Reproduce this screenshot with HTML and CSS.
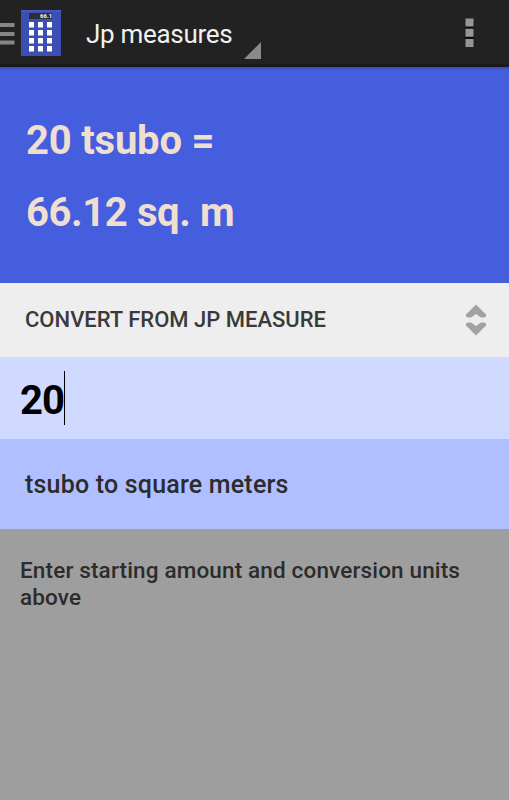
FILE: index.html
```
<!DOCTYPE html>
<html lang="en">
<head>
  <meta charset="UTF-8">
  <title>Jp measures</title>
  <meta name="viewport" content="width=device-width, initial-scale=1.0">
  <link rel="stylesheet" href="styles.css">
</head>
<body>

  <header class="action-bar">
    <svg class="drawer" width="15" height="24" viewBox="0 0 15 24">
      <path d="M0 1h14.5v4H0zM0 10h14.5v4H0zM0 18.5h14.5v4H0z" fill="#858687"/>
    </svg>
    <svg class="app-icon" width="40" height="46" viewBox="0 0 40 46">
      <rect width="40" height="46" fill="#3d4fb4"/>
      <rect width="40" height="1.5" fill="#4a5ac0"/>
      <rect x="8" y="3" width="23" height="6" fill="#2c2e38"/>
      <text class="app-icon-text" x="19" y="8">66.1</text>
      <g fill="#fff">
        <path d="M8 12h5v5.5H8zM17 12h5v5.5h-5zM26 12h5v5.5h-5z"/>
        <path d="M8 20h5v5.5H8zM17 20h5v5.5h-5zM26 20h5v5.5h-5z"/>
        <path d="M8 28h5v5.5H8zM17 28h5v5.5h-5zM26 28h5v5.5h-5z"/>
        <path d="M8 36h5v5.5H8zM17 36h5v5.5h-5zM26 36h5v5.5h-5z"/>
      </g>
    </svg>
    <h1 class="title">Jp measures</h1>
    <svg class="corner" width="17" height="17" viewBox="0 0 17 17">
      <path d="M17 0v17H0z" fill="#8a8a8a"/>
    </svg>
    <svg class="overflow" width="9" height="30" viewBox="0 0 9 30">
      <path d="M0 7h9v4H0zM0 17h9v4H0z" fill="#0c0c0c"/>
      <path d="M.5 .5h8v8h-8zM.5 10.7h8v8h-8zM.5 20.9h8v8h-8z" fill="#969696"/>
    </svg>
  </header>

  <section class="result">
    <div class="result-line from">20 tsubo =</div>
    <div class="result-line to">66.12 sq. m</div>
  </section>

  <div class="direction">
    <span class="direction-label">CONVERT FROM JP MEASURE</span>
    <svg class="arrows" width="22" height="32" viewBox="0 0 22 32">
      <path d="M.5 11L11 .5 21.5 11l-1.5 2.5h-4l-5-3.5-5 3.5H2zM.5 21L11 31.5 21.5 21 20 18.5h-4L11 22l-5-3.5H2z" fill="#a2a2a2"/>
    </svg>
  </div>

  <div class="amount"><span class="amount-value">20</span><span class="caret"></span></div>

  <div class="units"><span class="units-label">tsubo to square meters</span></div>

  <p class="hint">Enter starting amount and conversion units above</p>

</body>
</html>
```

FILE: styles.css
```
* {
  box-sizing: border-box;
}

body {
  margin: 0;
  min-height: 100vh;
  font-family: Roboto, sans-serif;
  background-color: #9e9e9e;
}

.action-bar {
  display: flex;
  align-items: flex-start;
  height: 67px;
  background-color: #222;
  border-bottom: 3px solid #1a1a1a;
}

.drawer {
  margin-top: 22px;
}

.app-icon {
  margin: 10px 0 0 6px;
}

.app-icon-text {
  font-size: 6px;
  font-weight: bold;
  fill: #fff;
}

.title {
  width: 146px;
  margin: 18px 0 0 25px;
  font-size: 26px;
  line-height: 32px;
  font-weight: 400;
  letter-spacing: -0.3px;
  color: #f0f0f0;
  white-space: nowrap;
}

.corner {
  margin: 42px 0 0 12px;
}

.overflow {
  margin: 18px 35px 0 auto;
}

.result {
  height: 216px;
  padding: 37px 26px 0;
  background: linear-gradient(#3a4fbd, #455ede 4px);
}

.result-line {
  font-size: 40px;
  line-height: 73px;
  font-weight: 700;
  color: #f0dfd0;
}

.from {
  letter-spacing: -0.2px;
}

.to {
  line-height: 71px;
  letter-spacing: -0.4px;
}

.direction {
  display: flex;
  align-items: center;
  justify-content: space-between;
  height: 74px;
  padding: 0 22px 0 25px;
  background-color: #eee;
}

.direction-label {
  padding-bottom: 2px;
  font-size: 22px;
  font-weight: 500;
  color: #3a3a3a;
}

.amount {
  display: flex;
  align-items: center;
  height: 82px;
  padding-left: 20px;
  background-color: #d0d9ff;
}

.amount-value {
  padding-top: 4px;
  font-size: 40px;
  font-weight: 700;
  letter-spacing: -0.9px;
  color: #000;
}

.caret {
  width: 1px;
  height: 54px;
  background-color: #000;
}

.units {
  display: flex;
  align-items: center;
  height: 90px;
  padding-left: 25px;
  background-color: #afbfff;
}

.units-label {
  font-size: 25px;
  font-weight: 500;
  letter-spacing: 0.2px;
  color: #2c2c2c;
}

.hint {
  margin: 0;
  padding: 28px 20px;
  font-size: 22.5px;
  line-height: 27px;
  font-weight: 500;
  letter-spacing: 0.15px;
  color: #2c2c2c;
}
```
